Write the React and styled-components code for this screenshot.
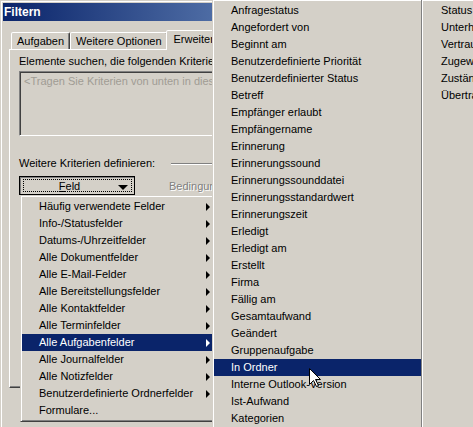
import React from 'react'
import styled, { createGlobalStyle } from 'styled-components'

const fieldGroups = [
  'Häufig verwendete Felder',
  'Info-/Statusfelder',
  'Datums-/Uhrzeitfelder',
  'Alle Dokumentfelder',
  'Alle E-Mail-Felder',
  'Alle Bereitstellungsfelder',
  'Alle Kontaktfelder',
  'Alle Terminfelder',
  'Alle Aufgabenfelder',
  'Alle Journalfelder',
  'Alle Notizfelder',
  'Benutzerdefinierte Ordnerfelder',
]

const taskFields = [
  'Anfragestatus',
  'Angefordert von',
  'Beginnt am',
  'Benutzerdefinierte Priorität',
  'Benutzerdefinierter Status',
  'Betreff',
  'Empfänger erlaubt',
  'Empfängername',
  'Erinnerung',
  'Erinnerungssound',
  'Erinnerungssounddatei',
  'Erinnerungsstandardwert',
  'Erinnerungszeit',
  'Erledigt',
  'Erledigt am',
  'Erstellt',
  'Firma',
  'Fällig am',
  'Gesamtaufwand',
  'Geändert',
  'Gruppenaufgabe',
  'In Ordner',
  'Interne Outlook-Version',
  'Ist-Aufwand',
  'Kategorien',
]

const taskFieldsMore = [
  'Status',
  'Unterhaltung',
  'Vertraulichkeit',
  'Zugewiesen',
  'Zuständig',
  'Übertragungsstatus',
]

const App = () => {
  return (
    <>
      <GlobalStyle />
      <Stage>
        <Window>
          <TitleBar>Filtern</TitleBar>
          <Body>
            <TabStrip>
              <Tab>Aufgaben</Tab>
              <Tab>Weitere Optionen</Tab>
              <Tab $selected>Erweitert</Tab>
            </TabStrip>
            <Panel>
              <Caption>Elemente suchen, die folgenden Kriterien erfüllen:</Caption>
              <CriteriaBox>
                <Placeholder>&lt;Tragen Sie Kriterien von unten in diese Liste ein&gt;</Placeholder>
              </CriteriaBox>
              <SectionRow>
                <Caption>Weitere Kriterien definieren:</Caption>
                <Etched />
              </SectionRow>
              <FieldRow>
                <FieldButton>
                  <FocusRect>
                    <ButtonLabel><u>F</u>eld</ButtonLabel>
                    <DropArrow />
                  </FocusRect>
                </FieldButton>
                <DisabledLabel>Bedingung:</DisabledLabel>
              </FieldRow>
            </Panel>
          </Body>
        </Window>

        <GroupMenu>
          {fieldGroups.map((label) => (
            <MenuItem key={label} $active={label === 'Alle Aufgabenfelder'}>
              {label}
              <SubArrow />
            </MenuItem>
          ))}
          <MenuItem>Formulare...</MenuItem>
        </GroupMenu>

        <FieldMenu>
          <MenuColumn $w={207}>
            {taskFields.map((label) => (
              <MenuItem key={label} $active={label === 'In Ordner'}>
                {label}
              </MenuItem>
            ))}
          </MenuColumn>
          <ColumnBreak />
          <MenuColumn $w={160}>
            {taskFieldsMore.map((label) => (
              <MenuItem key={label}>{label}</MenuItem>
            ))}
          </MenuColumn>
        </FieldMenu>

        <Cursor width="13" height="20" viewBox="0 0 13 20">
          <polygon
            points="0.5,0.5 0.5,16.5 4.5,12.5 7.5,18.5 9.5,17.5 6.5,11.5 11.5,11.5"
            fill="#fff"
            stroke="#000"
            strokeWidth="1"
          />
        </Cursor>
      </Stage>
    </>
  )
}

export default App

const GlobalStyle = createGlobalStyle`
  html, body {
    margin: 0;
    padding: 0;
    background: #d4d0c8;
  }
  body {
    font-family: 'Liberation Sans', Arial, sans-serif;
    font-size: 11px;
    color: #000;
  }
`

const Stage = styled.div`
  position: relative;
  width: 473px;
  height: 427px;
  overflow: hidden;
  background: #d4d0c8;
`

const Window = styled.div`
  box-sizing: border-box;
  width: 490px;
  height: 440px;
  padding: 2px;
  background: #d4d0c8;
  border: 1px solid;
  border-color: #d4d0c8 #404040 #404040 #d4d0c8;
  box-shadow: inset 1px 1px #fff, inset -1px -1px #808080;
`

const TitleBar = styled.div`
  height: 18px;
  display: flex;
  align-items: center;
  padding-left: 1px;
  background: linear-gradient(to right, #0a246a, #a6caf0);
  color: #fff;
  font-weight: bold;
  font-size: 12px;
`

const Body = styled.div`
  padding: 9px 0 0 6px;
`

const TabStrip = styled.div`
  position: relative;
  z-index: 1;
  display: flex;
  align-items: flex-start;
  height: 19px;
  padding-left: 2px;
`

const Tab = styled.div`
  flex-shrink: 0;
  box-sizing: border-box;
  height: ${(p) => (p.$selected ? '20px' : '17px')};
  margin-top: ${(p) => (p.$selected ? '0' : '2px')};
  margin-left: ${(p) => (p.$selected ? '-2px' : '0')};
  padding: 0 ${(p) => (p.$selected ? '7px' : '5px')};
  line-height: ${(p) => (p.$selected ? '17px' : '16px')};
  background: #d4d0c8;
  border: 1px solid;
  border-bottom: none;
  border-color: #fff #404040 transparent #fff;
  border-top-left-radius: 2px;
  border-top-right-radius: 2px;
  box-shadow: inset -1px 0 #808080;
  white-space: nowrap;
`

const Panel = styled.div`
  box-sizing: border-box;
  width: 472px;
  height: 339px;
  padding: 5px 9px 0 9px;
  border: 1px solid;
  border-color: #fff #404040 #404040 #fff;
  box-shadow: inset -1px -1px #808080;
`

const Caption = styled.div`
  line-height: 13px;
  white-space: nowrap;
`

const CriteriaBox = styled.div`
  box-sizing: border-box;
  height: 65px;
  margin-top: 3px;
  border: 1px solid;
  border-color: #808080 #fff #fff #808080;
  box-shadow: inset 1px 1px #404040, inset -1px -1px #d4d0c8;
  padding: 3px 4px;
`

const Placeholder = styled.div`
  line-height: 13px;
  color: #a09c94;
  white-space: nowrap;
`

const SectionRow = styled.div`
  display: flex;
  align-items: center;
  margin-top: 21px;
`

const Etched = styled.div`
  flex: 1;
  margin-left: 16px;
  margin-top: 1px;
  border-top: 1px solid #808080;
  border-bottom: 1px solid #fff;
`

const FieldRow = styled.div`
  display: flex;
  align-items: center;
  margin-top: 6px;
`

const FieldButton = styled.div`
  box-sizing: border-box;
  width: 116px;
  height: 19px;
  display: flex;
  padding: 1px 2px 1px 3px;
  background: #d4d0c8;
  border: 1px solid #000;
  box-shadow: inset 1px 1px #808080;
`

const FocusRect = styled.div`
  flex: 1;
  box-sizing: border-box;
  height: 13px;
  margin-top: 1px;
  display: flex;
  align-items: center;
  border: 1px dotted #000;
`

const ButtonLabel = styled.span`
  flex: 1;
  text-align: center;
  padding: 1px 4px 0 1px;
  line-height: 11px;
`

const DropArrow = styled.span`
  width: 0;
  height: 0;
  margin: 4px 3px 0 0;
  border-top: 5px solid #000;
  border-left: 5px solid transparent;
  border-right: 5px solid transparent;
`

const DisabledLabel = styled.span`
  margin-left: 34px;
  color: #808080;
  text-shadow: 1px 1px #fff;
  white-space: nowrap;
`

const Menu = styled.div`
  position: absolute;
  z-index: 5;
  background: #d4d0c8;
  border: 1px solid;
  border-color: #d4d0c8 #404040 #404040 #d4d0c8;
  box-shadow: inset 1px 1px #fff, inset -1px -1px #808080;
`

const GroupMenu = styled(Menu)`
  left: 20px;
  top: 195px;
  width: 190px;
  padding: 2px 1px;
`

const FieldMenu = styled(Menu)`
  left: 212px;
  top: -1px;
  display: flex;
  padding: 2px 1px;
`

const MenuColumn = styled.div`
  width: ${(p) => p.$w}px;
`

const ColumnBreak = styled.div`
  width: 0;
  margin: -2px 1px -2px 0;
  border-left: 1px solid #808080;
  border-right: 1px solid #fff;
`

const MenuItem = styled.div`
  height: 17px;
  line-height: 17px;
  padding-left: 17px;
  display: flex;
  align-items: center;
  justify-content: space-between;
  white-space: nowrap;
  background: ${(p) => (p.$active ? '#0a246a' : 'transparent')};
  color: ${(p) => (p.$active ? '#fff' : '#000')};
`

const SubArrow = styled.span`
  width: 0;
  height: 0;
  margin-right: 2px;
  border-left: 4px solid currentColor;
  border-top: 4px solid transparent;
  border-bottom: 4px solid transparent;
`

const Cursor = styled.svg`
  position: absolute;
  z-index: 10;
  left: 309px;
  top: 368px;
`
